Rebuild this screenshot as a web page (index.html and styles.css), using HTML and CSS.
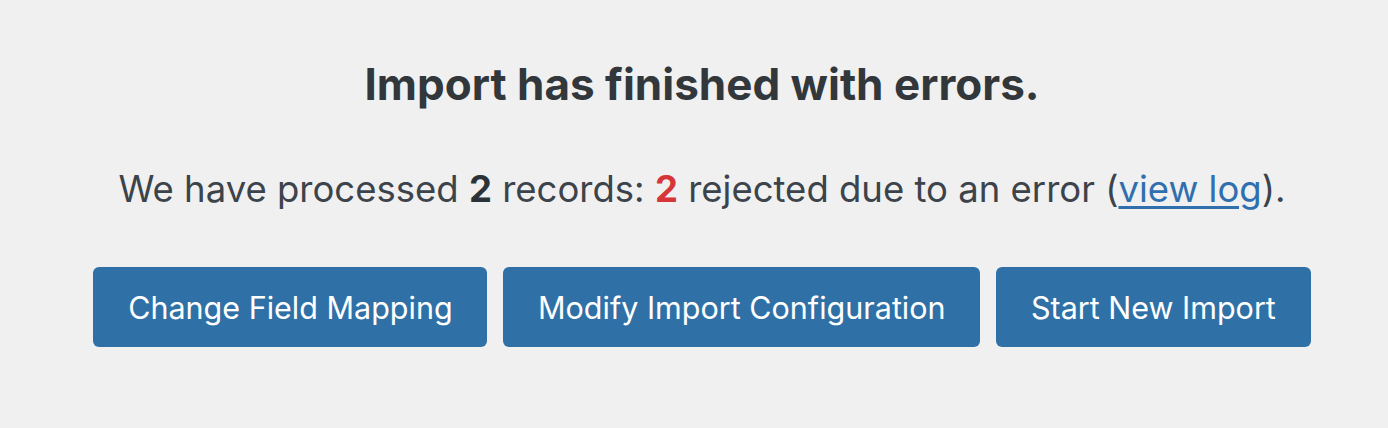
FILE: index.html
```html
<!DOCTYPE html>
<html>
<head>
<meta charset="utf-8">
<link rel="stylesheet" href="styles.css">
</head>
<body>
<main class="result">
  <h2 class="result-title">Import has finished with errors.</h2>
  <p class="result-summary">We have processed <strong>2</strong> records: <strong class="count-error">2</strong> rejected due to an error (<a href="#" class="log-link">view log</a>).</p>
  <div class="actions">
    <a href="#" class="button">Change Field Mapping</a>
    <a href="#" class="button">Modify Import Configuration</a>
    <a href="#" class="button">Start New Import</a>
  </div>
</main>
</body>
</html>
```
FILE: styles.css
```css
html, body {
  margin: 0;
  padding: 0;
  background: #f0f0f1;
}
body {
  font-family: Inter, "Noto Sans", sans-serif;
  color: #3c434a;
  width: 1388px;
  height: 428px;
}
.result {
  display: flex;
  flex-direction: column;
  align-items: center;
  padding: 56px 0 0 16px;
}
.result-title {
  margin: 0;
  font-size: 44px;
  line-height: 56px;
  font-weight: 700;
  color: #32373c;
}
.result-summary {
  margin: 52px 0 0;
  font-size: 36.5px;
  line-height: 50px;
}
.result-summary strong {
  font-weight: 700;
  color: #2c3338;
}
.result-summary .count-error {
  color: #d63638;
}
.log-link {
  color: #2f6fae;
  text-decoration: underline;
  text-underline-offset: 4px;
  text-decoration-thickness: 3px;
}
.actions {
  display: flex;
  gap: 16px;
  margin-top: 53px;
}
.button {
  display: flex;
  align-items: center;
  justify-content: center;
  height: 80px;
  padding: 0 34.7px;
  background: #2f71a6;
  color: #fff;
  border-radius: 6px;
  font-size: 30.5px;
  text-decoration: none;
}
```
